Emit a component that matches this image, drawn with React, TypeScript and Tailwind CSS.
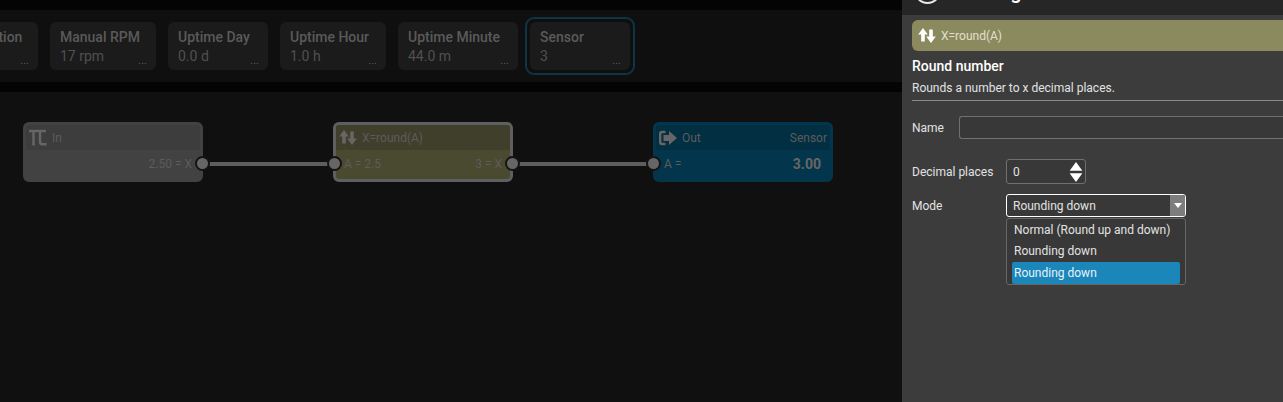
const font = { fontFamily: 'Roboto, "Noto Sans", sans-serif' };

function SwapIcon({ className }: { className: string }) {
  return (
    <svg viewBox="0 0 18 16" className={className} fill="currentColor">
      <path d="M5 0.5 L9.8 7 H6.8 V14 H3.2 V7 H0.2 Z" />
      <path d="M13 15.5 L8.2 9 H11.2 V2 H14.8 V9 H17.8 Z" />
    </svg>
  );
}

function PiIcon({ className }: { className: string }) {
  return (
    <svg viewBox="0 0 18 16" className={className} fill="none" stroke="currentColor" strokeWidth="2.4">
      <path d="M0 1.5 H17" />
      <path d="M4.5 1.5 V16" />
      <path d="M11 1.5 V12 Q11 14.8 13.5 14.8 H17.5" />
    </svg>
  );
}

function OutIcon({ className }: { className: string }) {
  return (
    <svg viewBox="0 0 18 16" className={className} fill="none">
      <path d="M6.5 2 H3 Q1.2 2 1.2 4 V12 Q1.2 14 3 14 H6.5" stroke="currentColor" strokeWidth="2.4" />
      <path d="M10 1 L18 8 L10 15 V11 H4.5 V5 H10 Z" fill="currentColor" />
    </svg>
  );
}

function Card({ title, value, w }: { title: string; value: string; w: string }) {
  return (
    <div className={`relative h-12 shrink-0 rounded-md bg-[#1b1b1b] pl-[10px] pt-[6px] leading-[19px] ${w}`}>
      <div className="whitespace-nowrap text-[14px] font-medium text-[#5a5a5a]">{title}</div>
      <div className="whitespace-nowrap text-[14px] text-[#505050]">{value}</div>
      <span className="absolute bottom-[3px] right-[9px] text-[11px] leading-[12px] text-[#5a5a5a]">...</span>
    </div>
  );
}

function Pin({ className }: { className: string }) {
  return <div className={`absolute h-[15px] w-[15px] rounded-full border-[2px] border-[#141414] bg-[#666666] ${className}`} />;
}

function Node({
  left,
  head,
  body,
  border,
  icon,
  title,
  right,
  a,
  b,
  bold,
}: {
  left: string;
  head: string;
  body: string;
  border: string;
  icon: React.ReactNode;
  title: string;
  right?: string;
  a?: string;
  b?: string;
  bold?: string;
}) {
  return (
    <div className={`absolute top-[122px] flex h-[60px] w-[180px] flex-col overflow-hidden rounded-md border-[3px] text-[12px] text-[#5c5c5c] ${left} ${border} ${body}`}>
      <div className={`flex h-[25px] shrink-0 items-center ${head}`}>
        <span className="ml-[3px] w-[20px] text-[#666666]">{icon}</span>
        <span className="ml-[3px]">{title}</span>
        {right && <span className="ml-auto mr-[3px]">{right}</span>}
      </div>
      <div className="flex flex-1 items-center justify-between pb-[1px] pl-[8px] pr-[8px]">
        <span>{a}</span>
        {bold ? <span className="mr-[1px] text-[14px] font-bold text-[#666666]">{bold}</span> : <span>{b}</span>}
      </div>
    </div>
  );
}

export default function App() {
  return (
    <div className="flex h-[402px] w-[1283px] overflow-hidden bg-[#101010]" style={font}>
      <div className="relative flex w-[902px] shrink-0 flex-col">
        <div className="h-[10px] bg-[#040404]" />
        <div className="flex h-[72px] items-center gap-3 overflow-hidden bg-[#0f0f0f]">
          <div className="ml-[-42px] shrink-0">
            <Card title="Function" value="" w="w-[80px]" />
          </div>
          <Card title="Manual RPM" value="17 rpm" w="w-[106px]" />
          <Card title="Uptime Day" value="0.0 d" w="w-[100px]" />
          <Card title="Uptime Hour" value="1.0 h" w="w-[106px]" />
          <Card title="Uptime Minute" value="44.0 m" w="w-[120px]" />
          <div className="ml-[-5px] shrink-0 rounded-[9px] border-[2px] border-[#0e3546] p-[3px]">
            <Card title="Sensor" value="3" w="w-[100px]" />
          </div>
        </div>
        <div className="h-[10px] bg-[#040404]" />
        <div className="flex-1 bg-[#101010]" />

        <div className="absolute left-[203px] top-[162px] h-[4px] w-[130px] bg-[#5e5e5e]" />
        <div className="absolute left-[513px] top-[162px] h-[4px] w-[140px] bg-[#5e5e5e]" />

        <Node
          left="left-[23px]"
          head="bg-[#3d3d3d]"
          body="bg-[#424242]"
          border="border-[#424242]"
          icon={<PiIcon className="h-[17px] w-[18px]" />}
          title="In"
          b="2.50 = X"
        />
        <Node
          left="left-[333px]"
          head="bg-[#403f2b]"
          body="bg-[#4a4a30]"
          border="border-[#5f5f5f]"
          icon={<SwapIcon className="h-[17px] w-[18px]" />}
          title="X=round(A)"
          a="A = 2.5"
          b="3 = X"
        />
        <Node
          left="left-[653px]"
          head="bg-[#022f41]"
          body="bg-[#03364c]"
          border="border-[#03364c]"
          icon={<OutIcon className="h-[16px] w-[18px]" />}
          title="Out"
          right="Sensor"
          a="A ="
          bold="3.00"
        />

        <Pin className="left-[195px] top-[156px]" />
        <Pin className="left-[327px] top-[156px]" />
        <Pin className="left-[505px] top-[156px]" />
        <Pin className="left-[646px] top-[156px]" />
      </div>

      <div className="relative flex min-w-0 flex-1 flex-col bg-[#3c3c3c] text-[12px] text-[#e2e2e2]">
        <div className="relative h-[15px] shrink-0 overflow-hidden bg-[#262626]">
          <div className="absolute left-[12px] top-[-23px] h-[27px] w-[27px] rounded-full border-[2px] border-[#e8e8e8]" />
          <span className="absolute left-[56px] top-[-21px] text-[20px] font-medium leading-[26px] text-white">Settings</span>
        </div>

        <div className="ml-[10px] mt-[5px] flex h-[31px] w-[400px] shrink-0 items-center rounded-l-md bg-[#8b895e]">
          <SwapIcon className="ml-[6px] h-[17px] w-[18px] text-white" />
          <span className="ml-[5px] text-[12px] text-[#e0e0d0]">X=round(A)</span>
        </div>

        <div className="ml-[10px] mt-[5px] text-[14px] font-medium leading-[20px] text-white">Round number</div>
        <div className="ml-[10px] mt-[3px] border-b border-[#8c8c8c] pb-[3px] text-[12px] leading-[18px]">Rounds a number to x decimal places.</div>

        <div className="ml-[10px] mt-[15px] flex h-[23px] items-center">
          <span className="w-[47px]">Name</span>
          <div className="h-[23px] flex-1 rounded-l-[3px] border border-r-0 border-[#707070] bg-[#383838]" />
        </div>

        <div className="ml-[10px] mt-[20px] flex h-[25px] items-center">
          <span className="w-[94px]">Decimal places</span>
          <div className="flex h-[25px] w-[80px] items-center justify-between rounded-[3px] border border-[#707070] bg-[#383838] pl-[6px] pr-[2px]">
            <span>0</span>
            <svg viewBox="0 0 14 22" className="h-[20px] w-[14px]" fill="#ffffff">
              <path d="M7 0 L14 9.5 H0 Z" />
              <path d="M0 12.5 H14 L7 22 Z" />
            </svg>
          </div>
        </div>

        <div className="ml-[10px] mt-[10px] flex h-[23px] items-center">
          <span className="w-[94px]">Mode</span>
          <div className="flex h-[23px] w-[180px] items-center justify-between overflow-hidden rounded-[3px] border border-white bg-[#383838] pl-[6px]">
            <span>Rounding down</span>
            <span className="flex h-full w-[15px] items-center justify-center bg-[#7d7d7d]">
              <svg viewBox="0 0 8 5" className="h-[5px] w-[8px]" fill="#ffffff">
                <path d="M0 0 H8 L4 5 Z" />
              </svg>
            </span>
          </div>
        </div>

        <div className="absolute left-[104px] top-[218px] h-[67px] w-[180px] whitespace-nowrap rounded-[3px] border border-[#666666] bg-[#383838] px-[5px] leading-[22px]">
          <div className="px-[2px]">Normal (Round up and down)</div>
          <div className="h-[21px] px-[2px] leading-[21px]">Rounding down</div>
          <div className="h-[22px] rounded-[2px] bg-[#1a86ba] px-[2px] pt-[1px] leading-[21px] text-[#e8f2f8]">Rounding down</div>
        </div>
      </div>
    </div>
  );
}
